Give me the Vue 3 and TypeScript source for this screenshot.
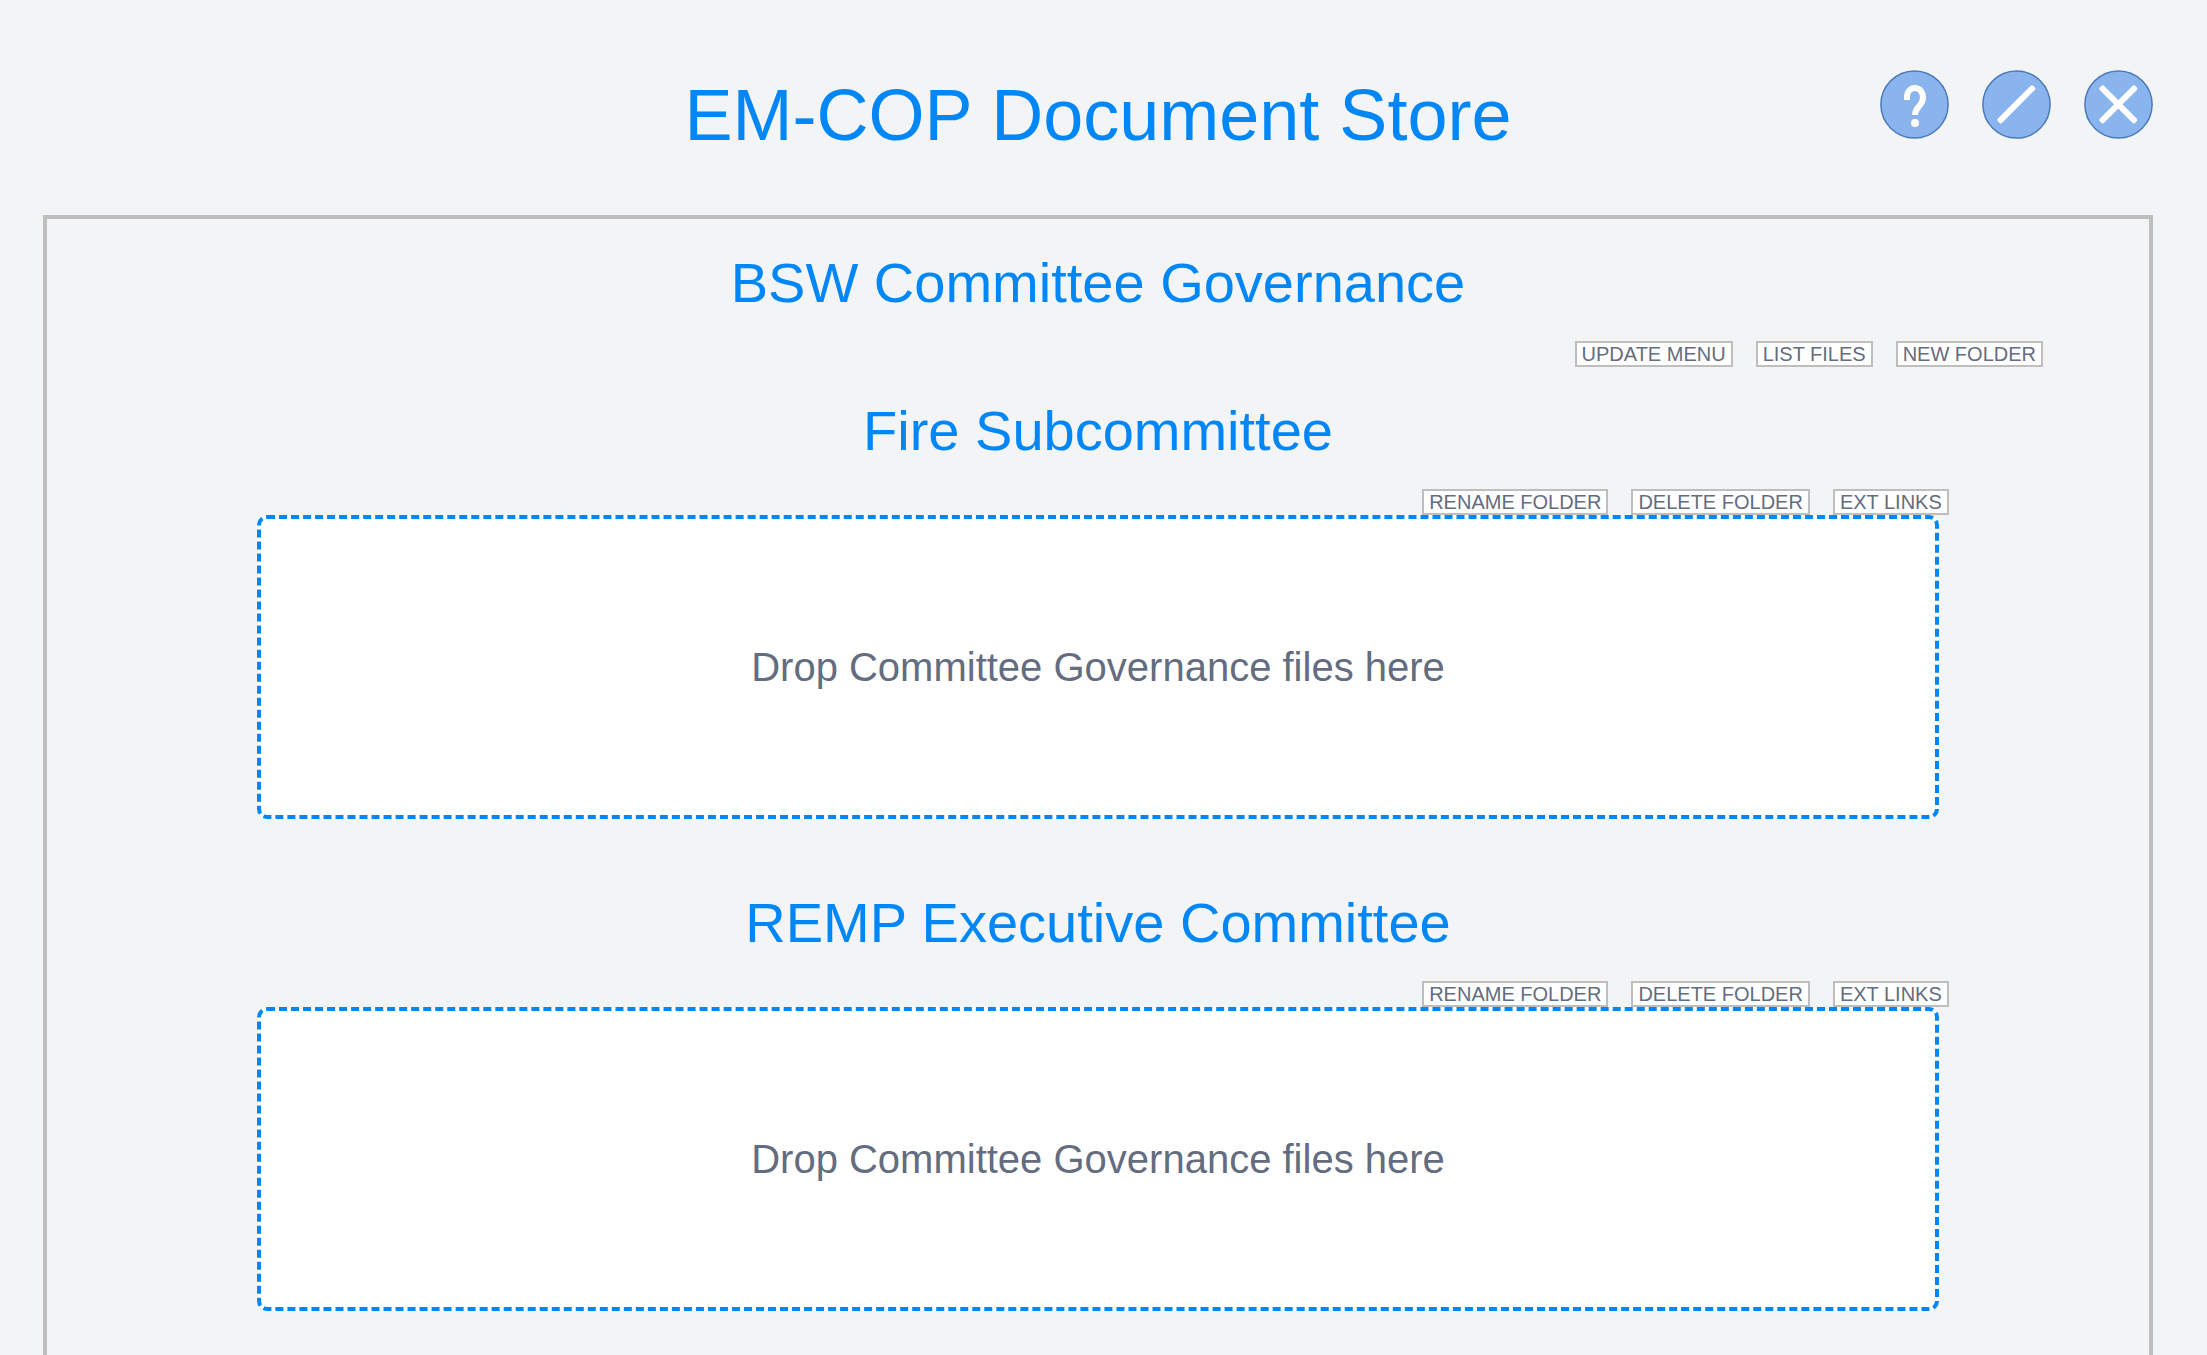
<script setup lang="ts">
interface Folder {
  id: string
  name: string
}

const menuActions: string[] = ['UPDATE MENU', 'LIST FILES', 'NEW FOLDER']
const folderActions: string[] = ['RENAME FOLDER', 'DELETE FOLDER', 'EXT LINKS']

const folders: Folder[] = [
  { id: 'fire', name: 'Fire Subcommittee' },
  { id: 'remp', name: 'REMP Executive Committee' },
]
</script>

<template>
  <div class="page">
    <header class="header">
      <h1 class="title">EM-COP Document Store</h1>
      <div class="tools">
        <button type="button" class="tool" aria-label="Help">
          <svg viewBox="0 0 69 69">
            <circle class="disc" cx="34.5" cy="34.5" r="33.6" />
            <path class="hook" d="M27 30v-3c0-5.500 3.500-9 8-9s8 4 8 9.500c0 8.500-8 9-8 17.500" />
            <circle class="glyph" cx="35" cy="53" r="4" />
          </svg>
        </button>
        <button type="button" class="tool" aria-label="Edit">
          <svg viewBox="0 0 69 69">
            <circle class="disc" cx="34.5" cy="34.5" r="33.6" />
            <rect class="glyph" x="9.300" y="31.300" width="50" height="6" rx="2" transform="rotate(-45 34.300 34.300)" />
          </svg>
        </button>
        <button type="button" class="tool" aria-label="Close">
          <svg viewBox="0 0 69 69">
            <circle class="disc" cx="34.5" cy="34.5" r="33.6" />
            <rect class="glyph" x="9.300" y="31.300" width="50" height="6" rx="2" transform="rotate(-45 34.300 34.300)" />
            <rect class="glyph" x="9.300" y="31.300" width="50" height="6" rx="2" transform="rotate(45 34.300 34.300)" />
          </svg>
        </button>
      </div>
    </header>

    <main class="panel">
      <h2 class="heading">BSW Committee Governance</h2>
      <div class="actions menu-actions">
        <button v-for="action in menuActions" :key="action" type="button" class="action">{{ action }}</button>
      </div>

      <section v-for="folder in folders" :key="folder.id" class="folder">
        <h2 class="heading">{{ folder.name }}</h2>
        <div class="actions folder-actions">
          <button v-for="action in folderActions" :key="action" type="button" class="action">{{ action }}</button>
        </div>
        <button type="button" class="dropzone">Drop Committee Governance files here</button>
      </section>
    </main>
  </div>
</template>

<style>
body {
  margin: 0;
  background: #f3f4f5;
}
</style>

<style scoped>
.page {
  box-sizing: border-box;
  display: flex;
  flex-direction: column;
  min-height: 100vh;
  padding: 70px 54px 0 43px;
  background: #f3f4f5;
  color: #646c7f;
  font-family: Arial, "Liberation Sans", sans-serif;
}

.header {
  display: grid;
  grid-template-columns: 1fr auto 1fr;
  align-items: start;
  margin-bottom: 60px;
}

.title {
  grid-column: 2;
  margin: 5px 0 0;
  color: #0087f7;
  font-size: 72px;
  font-weight: 400;
  line-height: 80px;
}

.tools {
  display: flex;
  justify-content: flex-end;
  gap: 33px;
}

.tool {
  width: 69px;
  height: 69px;
  padding: 0;
  border: 0;
  border-radius: 50%;
  background: none;
  cursor: pointer;
}

.tool svg {
  display: block;
  width: 100%;
  height: 100%;
}

.disc {
  fill: #8ab4ee;
  stroke: #4a7ab8;
  stroke-width: 1.5;
}

.glyph {
  fill: #fff;
}

.hook {
  fill: none;
  stroke: #fff;
  stroke-width: 6;
}

.panel {
  flex: 1;
  padding-top: 32px;
  border: 4px solid #bebebe;
  border-bottom: 0;
}

.heading {
  margin: 0 0 26px;
  color: #0087f7;
  font-size: 56px;
  font-weight: 400;
  line-height: 64px;
  text-align: center;
}

.actions {
  display: flex;
  justify-content: flex-end;
  gap: 23px;
}

.menu-actions {
  margin: 0 106px 32px;
}

.action {
  padding: 0 5px;
  border: 2px solid #bebebe;
  background: #fff;
  color: inherit;
  font: inherit;
  font-size: 20px;
  line-height: 22px;
  cursor: pointer;
}

.folder {
  width: 80%;
  margin: 0 auto;
}

.folder + .folder {
  margin-top: 72px;
}

.folder-actions {
  margin-right: -10px;
}

.dropzone {
  display: block;
  box-sizing: border-box;
  width: 100%;
  min-height: 304px;
  border: 4px dashed #0087f7;
  border-radius: 10px;
  background: #fff;
  color: inherit;
  font: inherit;
  font-size: 40px;
  line-height: 48px;
  cursor: pointer;
}
</style>
